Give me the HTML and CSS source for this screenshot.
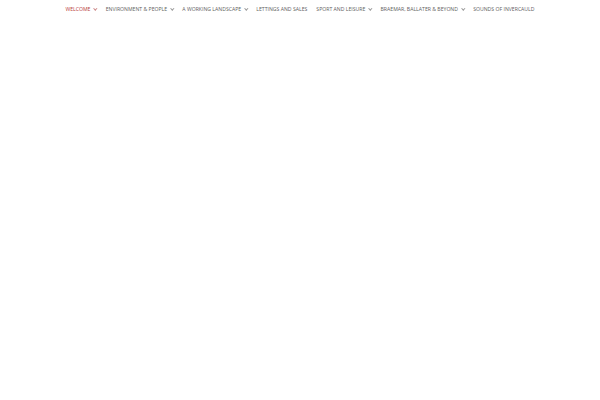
FILE: index.html
```html
<!DOCTYPE html>
<html>
<head>
<meta charset="utf-8">
<link rel="stylesheet" href="styles.css">
</head>
<body>
<nav class="nav">
  <ul class="menu">
    <li class="item active">WELCOME<span class="chev"></span></li>
    <li class="item">ENVIRONMENT &amp; PEOPLE<span class="chev"></span></li>
    <li class="item">A WORKING LANDSCAPE<span class="chev"></span></li>
    <li class="item">LETTINGS AND SALES</li>
    <li class="item">SPORT AND LEISURE<span class="chev"></span></li>
    <li class="item">BRAEMAR, BALLATER &amp; BEYOND<span class="chev"></span></li>
    <li class="item">SOUNDS OF INVERCAULD</li>
  </ul>
</nav>
</body>
</html>
```
FILE: styles.css
```css
html, body {
  margin: 0;
  padding: 0;
  background: #fff;
}
.nav {
  height: 18px;
  display: flex;
  justify-content: center;
}
.menu {
  list-style: none;
  margin: 0;
  padding: 0;
  display: flex;
  gap: 9px;
  font-family: "Open Sans", sans-serif;
  font-size: 5.15px;
  color: #5e5e5e;
}
.item {
  display: flex;
  align-items: center;
  height: 18px;
  white-space: nowrap;
}
.item.active {
  color: #b83a3a;
}
.chev {
  width: 1.6px;
  height: 1.6px;
  border-right: 0.5px solid #999;
  border-bottom: 0.5px solid #999;
  transform: rotate(45deg);
  margin-left: 3.6px;
  margin-top: -1px;
}
.item.active .chev {
  border-color: #c88;
}
```
